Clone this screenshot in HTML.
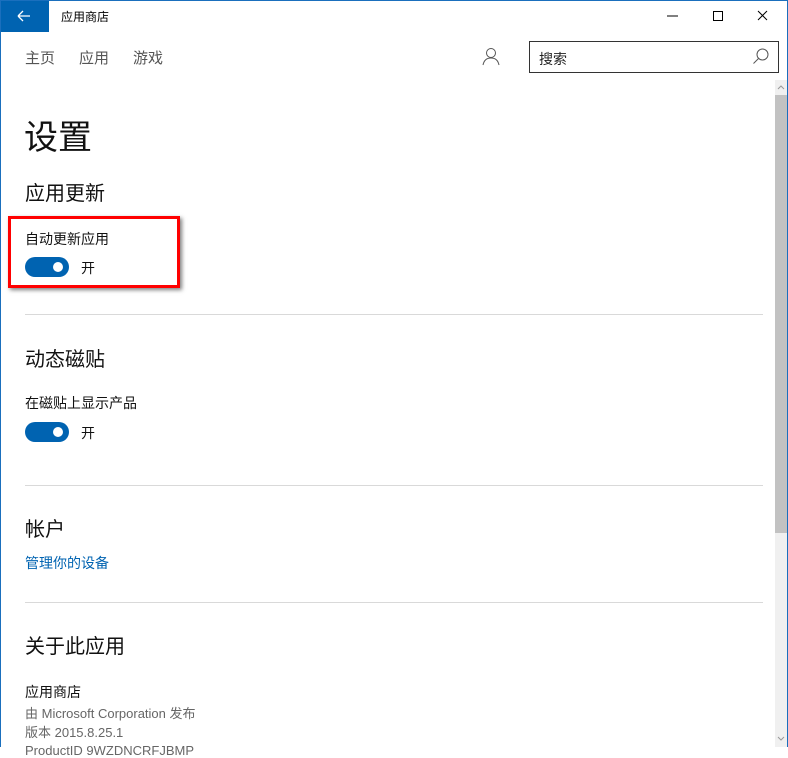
<!DOCTYPE html>
<html><head><meta charset="utf-8"><style>
*{margin:0;padding:0;box-sizing:border-box}
body{width:788px;height:747px;overflow:hidden;background:#fff;font-family:"Liberation Sans","Noto Sans CJK SC",sans-serif;position:relative;color:#000}
.frame{position:absolute;inset:0;border:1px solid #1a6fbd;border-bottom:none;pointer-events:none}
.a{position:absolute;white-space:nowrap}
.back{position:absolute;left:0;top:0;width:49px;height:32px;background:#0063b1}
.hr{position:absolute;left:25px;width:738px;height:1px;background:#d9d9d9}
.tog{position:absolute;left:25px;width:44px;height:20px;border-radius:10px;background:#0063b1}
.tog:after{content:"";position:absolute;right:6px;top:5px;width:10px;height:10px;border-radius:50%;background:#fff}
.h2{font-size:20px;color:#111}
.t{font-size:14px;color:#111}
.g{font-size:13px;color:#666}
</style></head><body>
<div class="back"><svg width="49" height="32"><path d="M18 16h12M18 16l5-5M18 16l5 5" stroke="#fff" stroke-width="1.3" fill="none"/></svg></div>
<div class="a" style="left:61px;top:8px;font-size:12px">应用商店</div>
<svg class="a" style="left:660px;top:8px" width="120" height="16"><path d="M7 8h11" stroke="#000"/><rect x="53.5" y="3.5" width="9" height="9" stroke="#000" fill="none"/><path d="M98 3l9 9M107 3l-9 9" stroke="#000"/></svg>
<div class="a" style="left:25px;top:47px;font-size:15px;color:#555">主页</div>
<div class="a" style="left:79px;top:47px;font-size:15px;color:#555">应用</div>
<div class="a" style="left:133px;top:47px;font-size:15px;color:#555">游戏</div>
<svg class="a" style="left:481px;top:47px" width="20" height="20"><circle cx="10" cy="6" r="4.5" stroke="#555" fill="none"/><path d="M2 18c1-5 4-7 8-7s7 2 8 7" stroke="#555" fill="none"/></svg>
<div class="a" style="left:529px;top:41px;width:250px;height:32px;border:1px solid #333"></div>
<div class="a" style="left:539px;top:49px;font-size:14px;color:#222">搜索</div>
<svg class="a" style="left:751px;top:47px" width="20" height="20"><circle cx="11.5" cy="7.5" r="5.5" stroke="#555" fill="none"/><path d="M7.5 11.5l-5 5" stroke="#555"/></svg>
<div class="a" style="left:775px;top:80px;width:12px;height:667px;background:#f0f0f0"></div>
<div class="a" style="left:775px;top:95px;width:12px;height:438px;background:#c2c2c2"></div>
<svg class="a" style="left:775px;top:82px" width="12" height="12"><path d="M3 7l3-3 3 3" stroke="#999" fill="none"/></svg>
<svg class="a" style="left:775px;top:733px" width="12" height="12"><path d="M3 4l3 3 3-3" stroke="#999" fill="none"/></svg>
<div class="a" style="left:24px;top:110px;font-size:34px;color:#111">设置</div>
<div class="a h2" style="left:25px;top:177px">应用更新</div>
<div class="a t" style="left:25px;top:229px">自动更新应用</div>
<div class="tog" style="top:257px"></div>
<div class="a t" style="left:81px;top:258px">开</div>
<div class="a" style="left:8px;top:216px;width:172px;height:72px;border:3px solid #f00;box-shadow:2px 2px 4px rgba(0,0,0,.5)"></div>
<div class="hr" style="top:314px"></div>
<div class="a h2" style="left:25px;top:343px">动态磁贴</div>
<div class="a t" style="left:25px;top:393px">在磁贴上显示产品</div>
<div class="tog" style="top:422px"></div>
<div class="a t" style="left:81px;top:423px">开</div>
<div class="hr" style="top:485px"></div>
<div class="a h2" style="left:25px;top:513px">帐户</div>
<div class="a t" style="left:25px;top:553px;color:#0063b1">管理你的设备</div>
<div class="hr" style="top:602px"></div>
<div class="a h2" style="left:25px;top:630px">关于此应用</div>
<div class="a t" style="left:25px;top:682px">应用商店</div>
<div class="a g" style="left:25px;top:703px">由 Microsoft Corporation 发布</div>
<div class="a g" style="left:25px;top:722px">版本 2015.8.25.1</div>
<div class="a g" style="left:25px;top:743px">ProductID 9WZDNCRFJBMP</div>
<div class="frame"></div>
</body></html>
